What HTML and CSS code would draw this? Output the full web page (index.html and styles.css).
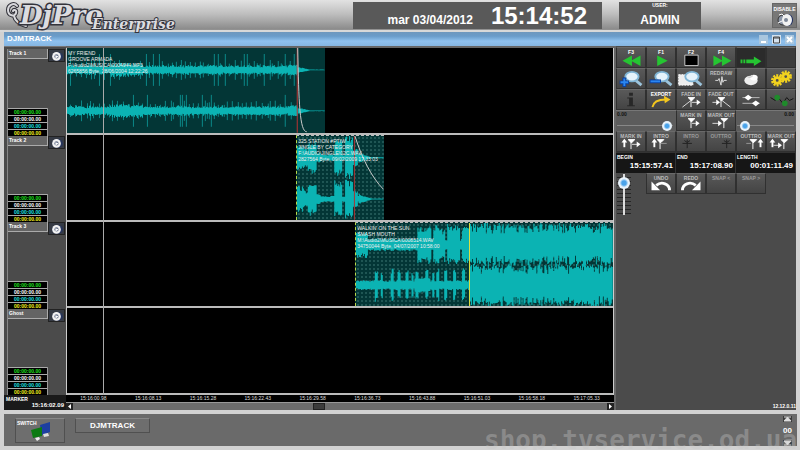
FILE: index.html
```html
<!DOCTYPE html>
<html lang="it">
<head>
  <meta charset="utf-8">
  <title>DjPro Enterprise</title>
  <link rel="stylesheet" href="styles.css">
</head>
<body>
  <header class="topbar">
    <div class="logo">
      <svg class="logo-swirl" viewBox="0 0 22 26">
        <path d="M11 4C8 0 2 3 2 8c0 6 7 7 8 3 1-3-2-4-3-2M8 14c1 5 5 8 12 10" fill="none" stroke="#34343c" stroke-width="4" stroke-linecap="round"/>
        <path d="M11 4C8 0 2 3 2 8c0 6 7 7 8 3 1-3-2-4-3-2M8 14c1 5 5 8 12 10" fill="none" stroke="#d8d8dc" stroke-width="2" stroke-linecap="round"/>
      </svg>
      <span class="logo-name">DjPro</span>
      <span class="logo-edition">Enterprise</span>
    </div>
    <div class="clock">
      <span class="date">mar 03/04/2012</span>
      <span class="time">15:14:52</span>
    </div>
    <div class="user">
      <span class="tiny">USER:</span>
      <span class="user-name">ADMIN</span>
    </div>
    <button class="disable">
      <span class="tiny">DISABLE</span>
      <svg width="18" height="15" viewBox="0 0 18 15">
        <ellipse cx="7" cy="8" rx="5" ry="5" fill="#8d97a8" stroke="#333"/>
        <ellipse cx="12" cy="8" rx="5" ry="6" fill="#1c2c60"/>
        <ellipse cx="11" cy="8" rx="5" ry="6" fill="#f2f2f2"/>
        <circle cx="10" cy="8" r="2" fill="#7d8798"/>
        <path d="M3 3l3-1 2 2M2 11l4-2" stroke="#fff" fill="none"/>
      </svg>
    </button>
  </header>

  <main class="window">
    <div class="titlebar">
      <span>DJMTRACK</span>
      <div class="window-buttons">
        <button aria-label="Minimize"><svg viewBox="0 0 9 9"><path d="M2 6h5v2H2z" fill="#fff"/></svg></button>
        <button aria-label="Maximize"><svg viewBox="0 0 9 9"><path d="M1.500 2h6v6h-6zM1.500 3h6" fill="none" stroke="#444"/></svg></button>
        <button aria-label="Close"><svg viewBox="0 0 9 9"><path d="M2 2l5 5M7 2L2 7" stroke="#fff" stroke-width="2"/></svg></button>
      </div>
    </div>

    <div class="workspace">
      <!-- track heads -->
      <section class="heads">
        <div class="head">
          <div class="head-top"><span class="head-name">Track 1</span><button aria-label="Track 1 audio"><svg viewBox="0 0 12 10"><use href="#speaker"/></svg></button></div>
          <div class="counters"><span class="green">00:00:00.00</span><span>00:00:00.00</span><span class="cyan">00:00:00.00</span><span class="yellow">00:00:00.00</span></div>
        </div>
        <div class="head">
          <div class="head-top"><span class="head-name">Track 2</span><button aria-label="Track 2 audio"><svg viewBox="0 0 12 10"><use href="#speaker"/></svg></button></div>
          <div class="counters"><span class="green">00:00:00.00</span><span>00:00:00.00</span><span class="cyan">00:00:00.00</span><span class="yellow">00:00:00.00</span></div>
        </div>
        <div class="head">
          <div class="head-top"><span class="head-name">Track 3</span><button aria-label="Track 3 audio"><svg viewBox="0 0 12 10"><use href="#speaker"/></svg></button></div>
          <div class="counters"><span class="green">00:00:00.00</span><span>00:00:00.00</span><span class="cyan">00:00:00.00</span><span class="yellow">00:00:00.00</span></div>
        </div>
        <div class="head">
          <div class="head-top"><span class="head-name">Ghost</span><button aria-label="Ghost audio"><svg viewBox="0 0 12 10"><use href="#speaker"/></svg></button></div>
          <div class="counters"><span class="green">00:00:00.00</span><span>00:00:00.00</span><span class="cyan">00:00:00.00</span><span class="yellow">00:00:00.00</span></div>
        </div>
        <div class="marker">
          <span class="tiny">MARKER</span>
          <span class="marker-time">15:16:02.09</span>
        </div>
      </section>

      <!-- timeline -->
      <section class="timeline">
        <div class="lanes">
          <div class="lane">
            <div class="clip clip-first">
              <svg class="wave" id="wave1" viewBox="0 0 258 85" preserveAspectRatio="none"></svg>
              <p>MY FRIEND<br>GROOVE ARMADA<br>F:\Audio2\MUSICA\0004944.MP3<br>6265856 Byte, 28/06/2004 12:22:26</p>
            </div>
          </div>
          <div class="lane">
            <div class="clip clip-second grid-dots">
              <svg class="wave" id="wave2" viewBox="0 0 88 85" preserveAspectRatio="none"></svg>
              <p>325 STATION #PTIW<br>JINGLE BY CATEGORY<br>F:\AUDIO\JINGLE\02C.WAV<br>2827564 Byte, 09/02/2009 17:33:03</p>
            </div>
          </div>
          <div class="lane">
            <div class="clip clip-third grid-dots">
              <svg class="wave" id="wave3" viewBox="0 0 259 85" preserveAspectRatio="none"></svg>
              <p>WALKIN' ON THE SUN<br>SMASH MOUTH<br>M:\Audio2\MUSICA\0008514.WAV<br>34750044 Byte, 04/07/2007 10:58:00</p>
            </div>
          </div>
          <div class="lane"></div>
          <div class="cursor"></div>
        </div>
        <div class="ruler">
          <span>15:16:00.98</span><span>15:16:08.13</span><span>15:16:15.28</span><span>15:16:22.43</span><span>15:16:29.58</span><span>15:16:36.73</span><span>15:16:43.88</span><span>15:16:51.03</span><span>15:16:58.18</span><span>15:17:05.33</span>
        </div>
        <div class="scrollbar">
          <button aria-label="Scroll left"><svg viewBox="0 0 7 7"><path d="M5 1v5L2 3.500z" fill="#fff"/></svg></button>
          <input type="range" min="0" max="100" value="46" aria-label="Scroll timeline">
          <button aria-label="Scroll right"><svg viewBox="0 0 7 7"><path d="M2 1v5l3-2.500z" fill="#fff"/></svg></button>
        </div>
      </section>

      <!-- command panel -->
      <section class="panel">
        <div class="commands">
          <button><span class="lit">F3</span><svg viewBox="0 0 28 20"><path d="M15 8v11L5 13.500zM24 8v11l-10-5.500z" fill="#25c532"/></svg></button>
          <button><span class="lit">F1</span><svg viewBox="0 0 28 20"><path d="M10 8v11l11-5.500z" fill="#25c532"/></svg></button>
          <button><span class="lit">F2</span><svg viewBox="0 0 28 20"><path d="M7.500 7.500h14v11h-14z" fill="#000" stroke="#ccc"/></svg></button>
          <button><span class="lit">F4</span><svg viewBox="0 0 28 20"><path d="M6 8v11l10-5.500zM15 8v11l10-5.500z" fill="#25c532"/></svg></button>
          <button class="dark" aria-label="Go on"><svg viewBox="0 0 28 20"><path d="M3 12h2v4H3zM6 12h2v4H6zM9 12h8V9l8 5-8 5v-3H9z" fill="#25c532"/></svg></button>
          <button class="off" disabled aria-label="Empty"></button>

          <button aria-label="Zoom in"><svg viewBox="0 0 28 20"><use href="#lens"/><path d="M7 9v10M2 14h10" stroke="#0a3f9e" stroke-width="4"/><path d="M7 10v8M3 14h8" stroke="#2b86f0" stroke-width="2"/></svg></button>
          <button aria-label="Zoom out"><svg viewBox="0 0 28 20"><use href="#lens"/><path d="M2 13h12" stroke="#0a3f9e" stroke-width="4"/><path d="M3 13h10" stroke="#2b86f0" stroke-width="2"/></svg></button>
          <button aria-label="Zoom selection"><svg viewBox="0 0 28 20"><path d="M1 6h15v11H1z" fill="#eee" stroke="#fff" stroke-dasharray="2 1"/><use href="#lens"/></svg></button>
          <button><span>REDRAW</span><svg viewBox="0 0 28 20"><path d="M8 12h3l1-2 2 7 1-9 1 6 1-2h3" fill="none" stroke="#ddd"/></svg></button>
          <button aria-label="Mouse"><svg viewBox="0 0 28 20"><ellipse cx="14" cy="12" rx="7" ry="5" fill="#eee"/><ellipse cx="17" cy="9" rx="4" ry="3" fill="#fff"/><path d="M10 8c2 1 4 1 6-1" fill="none" stroke="#bbb"/></svg></button>
          <button aria-label="Settings"><svg viewBox="0 0 28 20"><circle cx="10" cy="12" r="5" fill="none" stroke="#f2d21e" stroke-width="3" stroke-dasharray="2 1.140"/><circle cx="10" cy="12" r="3" fill="none" stroke="#f2d21e" stroke-width="3"/><circle cx="19" cy="8" r="5" fill="none" stroke="#f2d21e" stroke-width="3" stroke-dasharray="2 1.140"/><circle cx="19" cy="8" r="3" fill="none" stroke="#f2d21e" stroke-width="3"/></svg></button>

          <button aria-label="Info"><svg viewBox="0 0 28 20"><path d="M12 3h4v3h-4zM10 8h6v8h2v1h-8v-1h2V9h-2z" fill="#272727"/></svg></button>
          <button><span class="lit">EXPORT</span><svg viewBox="0 0 28 20"><path d="M5 18c1-6 6-8 14-8" fill="none" stroke="#f2c61e" stroke-width="2"/><path d="M17 6l7 4-6 4z" fill="#f2c61e"/></svg></button>
          <button><span>FADE IN</span><svg viewBox="0 0 28 20"><use href="#post"/><path d="M5 18l9-7M15 13h7" stroke="#ddd" fill="none"/><path d="M20 10l4 3-4 3z" fill="#fff"/></svg></button>
          <button><span>FADE OUT</span><svg viewBox="0 0 28 20"><use href="#post"/><path d="M15 11l9 7M5 13h6" stroke="#ddd" fill="none"/><path d="M9 10l4 3-4 3z" fill="#fff"/></svg></button>
          <button aria-label="Levels"><svg viewBox="0 0 28 20"><path d="M5 8h18M5 14h18" stroke="#bbb"/><path d="M11 5l4 3-4 3-4-3zM19 11l4 3-4 3-4-3z" fill="#fff"/></svg></button>
          <button aria-label="Envelope"><svg viewBox="0 0 28 20"><path d="M3 8l5 3 3-3 5 6 4-6 3 3 4-2" fill="none" stroke="#111"/><circle cx="10" cy="8" r="3" fill="#1f8a2b"/><circle cx="18" cy="14" r="3" fill="#1f8a2b"/></svg></button>

          <label class="gain"><span>0.00</span><input type="range" min="0" max="100" value="98"></label>
          <button><span>MARK IN</span><svg viewBox="0 0 28 20"><use href="#post"/><path d="M15 13h6" stroke="#ddd"/><path d="M19 10l4 3-4 3z" fill="#fff"/></svg></button>
          <button><span>MARK OUT</span><svg viewBox="0 0 28 20"><use href="#post" x="3"/><path d="M5 13h7" stroke="#ddd"/><path d="M11 10l4 3-4 3z" fill="#fff"/></svg></button>
          <label class="gain right"><span>0.00</span><input type="range" min="0" max="100" value="6"></label>

          <button><span>MARK IN</span><svg viewBox="0 0 28 20"><use href="#up" x="-9"/><use href="#post"/><path d="M15 13h6" stroke="#ddd"/><path d="M20 10l4 3-4 3z" fill="#fff"/></svg></button>
          <button><span>INTRO</span><svg viewBox="0 0 28 20"><use href="#up" x="-9"/><use href="#post" x="-1"/><path d="M14 12h6" stroke="#999"/></svg></button>
          <button class="faded"><span>INTRO</span><svg viewBox="0 0 28 20"><path d="M5 12h10M10 8v9M7 9l3 2 3-2" fill="none" stroke="#222"/></svg></button>
          <button class="faded"><span>OUTTRO</span><svg viewBox="0 0 28 20"><path d="M15 12h10M20 8v9M17 9l3 2 3-2" fill="none" stroke="#222"/></svg></button>
          <button><span>OUTTRO</span><svg viewBox="0 0 28 20"><path d="M9 12h5" stroke="#999"/><use href="#post" x="2"/><use href="#up" x="8"/></svg></button>
          <button><span>MARK OUT</span><svg viewBox="0 0 28 20"><use href="#up" x="-11"/><path d="M6 14h6" stroke="#ddd"/><path d="M11 11l4 3-4 3z" fill="#fff"/><use href="#post" x="3"/></svg></button>

          <div class="readout"><span class="tiny">BEGIN</span><b>15:15:57.41</b></div>
          <div class="readout"><span class="tiny">END</span><b>15:17:08.90</b></div>
          <div class="readout"><span class="tiny">LENGTH</span><b>00:01:11.49</b></div>

          <div class="volume"><input type="range" min="0" max="100" value="90" aria-label="Volume"></div>
          <button><span>UNDO</span><svg viewBox="0 0 28 20"><path d="M9 12c6-5 14-1 14 5" fill="none" stroke="#fff" stroke-width="3"/><path d="M4 8v9h9z" fill="#fff"/></svg></button>
          <button><span>REDO</span><svg viewBox="0 0 28 20"><path d="M19 12c-6-5-14-1-14 5" fill="none" stroke="#fff" stroke-width="3"/><path d="M24 8v9h-9z" fill="#fff"/></svg></button>
          <button class="faded"><span>SNAP &lt;</span></button>
          <button class="faded"><span>SNAP &gt;</span></button>
        </div>
        <div class="version">12.12.0.11</div>
      </section>
    </div>
  </main>

  <footer class="taskbar">
    <button class="switch">
      <span class="tiny">SWITCH</span>
      <svg width="22" height="20" viewBox="0 0 22 20">
        <path d="M10 4l10-3v10l-8 3z" fill="#1d3fa0"/>
        <path d="M13 13l5-1 1 3-5 1z" fill="#ddd"/>
        <path d="M1 9l11-3v9L3 17z" fill="#0c7a12"/>
        <path d="M5 17l4-1 1 2-3 2z" fill="#eee"/>
      </svg>
    </button>
    <button class="task">DJMTRACK</button>
    <div class="pager">
      <button aria-label="Previous page"><svg viewBox="0 0 9 6"><path d="M1 1h7M4.500 1L1 5h7z" fill="#ddd" stroke="#ddd"/></svg></button>
      <span>00</span>
      <button aria-label="Next page"><svg viewBox="0 0 9 6"><path d="M1 5h7M4.500 5L1 1h7z" fill="#ddd" stroke="#ddd"/></svg></button>
    </div>
  </footer>
  <div class="watermark">shop.tvservice.od.ua</div>

  <!-- shared icon parts -->
  <svg width="0" height="0" class="symbols">
    <defs>
      <g id="speaker"><ellipse cx="7" cy="5" rx="5" ry="4" fill="#26345c"/><ellipse cx="6" cy="5" rx="4" ry="4" fill="#f2f2f2"/><circle cx="6" cy="5" r="2" fill="#68738c"/><path d="M5 4l3 1-3 2z" fill="#fff"/></g>
      <g id="lens"><path d="M19 12l6 5" stroke="#9cc4dc" stroke-width="3"/><ellipse cx="15" cy="8" rx="7" ry="5" fill="#e6f3fb" stroke="#7fb4d4" stroke-width="2"/></g>
      <g id="post"><path d="M14 9v9M11 8h7l-3 3h-1z" fill="#fff" stroke="#fff"/></g>
      <g id="up"><path d="M16 9v7" stroke="#fff" stroke-width="2"/><path d="M13 11l3-4 3 4z" fill="#fff"/></g>
    </defs>
  </svg>

  <script src="script.js"></script>
</body>
</html>
```

FILE: styles.css
```css
* {
  box-sizing: border-box;
}

body {
  margin: 0;
  min-height: 100vh;
  display: flex;
  flex-direction: column;
  overflow: hidden;
  position: relative;
  background-color: #d2d2d2;
  color: #fff;
  font-family: "Liberation Sans", Arial, sans-serif;
}

button {
  display: block;
  margin: 0;
  padding: 0;
  border: none;
  color: #fff;
  font-family: inherit;
}

svg {
  display: block;
}

.symbols {
  position: absolute;
}

.tiny {
  font-size: 5px;
  line-height: 6px;
  font-weight: bold;
}

/* top bar */
.topbar {
  display: flex;
  flex: none;
  height: 32px;
  padding: 2px 3px 2px 6px;
  background: linear-gradient(#e2e2e2, #bdbdbd 45%, #8a8a8a 92%, #d8d8d8 94%);
}

.logo {
  position: relative;
  width: 347px;
}

.logo-swirl {
  width: 22px;
  height: 26px;
}

.logo-name,
.logo-edition {
  position: absolute;
  font-family: "DejaVu Serif", serif;
  font-weight: bold;
  font-style: italic;
  color: #dcdce0;
  -webkit-text-stroke: 3px #34343c;
  paint-order: stroke fill;
}

.logo-name {
  left: 14px;
  top: -2px;
  font-size: 26px;
  line-height: 30px;
}

.logo-edition {
  left: 86px;
  top: 14px;
  font-size: 14px;
  line-height: 16px;
  -webkit-text-stroke-width: 2px;
}

.clock {
  display: flex;
  justify-content: flex-end;
  align-items: baseline;
  width: 249px;
  height: 27px;
  padding-right: 15px;
  gap: 18px;
  background-color: #595959;
  font-weight: bold;
}

.date {
  font-size: 12px;
}

.time {
  font-size: 24px;
  line-height: 27px;
}

.user {
  display: flex;
  flex-direction: column;
  align-items: center;
  width: 82px;
  height: 27px;
  margin-left: 17px;
  background-color: #595959;
}

.user-name {
  font-size: 12px;
  line-height: 24px;
  font-weight: bold;
}

.disable {
  display: flex;
  flex-direction: column;
  align-items: center;
  width: 25px;
  height: 25px;
  margin: 1px 0 0 auto;
  padding-top: 2px;
  background-color: #777;
  border: 1px solid #666;
}

/* main window */
.window {
  flex: 1;
  display: flex;
  flex-direction: column;
  margin: 0 4px;
}

.titlebar {
  display: flex;
  justify-content: space-between;
  align-items: center;
  height: 14px;
  padding: 0 2px 0 3px;
  background: linear-gradient(#6e97bd, #6a9cca 30%, #8fc1ee 65%, #86b6e2);
  font-size: 8px;
  line-height: 14px;
  font-weight: bold;
}

.window-buttons {
  display: flex;
  gap: 4px;
}

.window-buttons button {
  width: 9px;
  height: 9px;
  background-color: #d4e2ee;
}

.window-buttons button:nth-child(1),
.window-buttons button:nth-child(3) {
  background-color: #a9c6de;
}

.workspace {
  flex: 1;
  display: grid;
  grid-template-columns: 62px 1fr 180px;
  background-color: #4b4b4b;
}

/* track heads */
.heads {
  display: flex;
  flex-direction: column;
  padding-top: 2px;
  border-top: 1px solid #777;
}

.head {
  flex: 1;
  display: flex;
  flex-direction: column;
  justify-content: space-between;
  margin-left: 3px;
  border-left: 1px solid #888;
}

.head-top {
  display: flex;
}

.head-name {
  width: 40px;
  height: 10px;
  padding-left: 1px;
  background-color: #646464;
  border: 1px solid #aaa;
  border-width: 0 1px 1px 0;
  font-size: 5px;
  line-height: 8px;
  font-weight: bold;
}

.head-top button {
  width: 17px;
  height: 13px;
  padding: 1px;
  background-color: #353a44;
  border: 1px solid #222;
}

.counters {
  display: grid;
  width: 40px;
  border-right: 1px solid #999;
}

.counters span {
  height: 7px;
  background-color: #000;
  border-top: 1px solid #aaa;
  font-size: 5px;
  line-height: 6px;
  font-weight: bold;
  text-align: center;
}

.counters .green { color: #1fe01f; }
.counters .cyan { color: #1fe0e0; }
.counters .yellow { color: #f0f01f; }

.marker {
  display: flex;
  flex-direction: column;
  height: 15px;
  padding: 1px 2px;
  background-color: #1a1a1a;
}

.marker-time {
  align-self: flex-end;
  font-size: 6px;
  line-height: 7px;
  font-weight: bold;
}

/* timeline */
.timeline {
  display: flex;
  flex-direction: column;
  border-top: 2px solid #666;
  border-right: 2px solid #666;
}

.lanes {
  flex: 1;
  display: flex;
  flex-direction: column;
  position: relative;
  background-color: #000;
  border: 1px solid #ccc;
  border-width: 0 1px;
}

.lane {
  flex: 1;
  position: relative;
  border-bottom: 2px solid #bbb;
}

.clip {
  position: absolute;
  top: 0;
  bottom: 0;
  background-color: #033636;
}

.clip-first { left: 0; width: 47.2%; }
.clip-second { left: 42%; width: 16%; }
.clip-third { left: 52.800%; right: 0; }

.grid-dots {
  background-image: radial-gradient(#1f5654 1px, transparent 1px);
  background-size: 4px 4px;
  border-top: 1px dashed #bbb;
  border-left: 1px dashed #b8d84a;
}

.wave {
  width: 100%;
  height: 100%;
}

.clip p {
  position: absolute;
  top: 2px;
  left: 1px;
  margin: 0;
  white-space: nowrap;
  font-size: 5px;
  line-height: 6px;
  color: #eee;
}

.cursor {
  position: absolute;
  top: 0;
  bottom: 0;
  left: 6.600%;
  width: 1px;
  background-color: #aaa;
}

.ruler {
  display: grid;
  grid-template-columns: repeat(10, 1fr);
  height: 8px;
  background-color: #000;
  border-bottom: 1px solid #999;
  font-size: 5px;
  line-height: 7px;
  text-align: center;
  color: #ddd;
}

.scrollbar {
  display: flex;
  height: 7px;
  background-color: #6c6c6c;
}

.scrollbar button {
  width: 7px;
  background-color: #222;
}

input[type="range"] {
  appearance: none;
  margin: 0;
  background: none;
}

.scrollbar input {
  flex: 1;
  height: 7px;
}

.scrollbar input::-webkit-slider-thumb {
  appearance: none;
  width: 12px;
  height: 7px;
  background-color: #3c3c3c;
  border: 1px solid #222;
}

/* command panel */
.panel {
  display: flex;
  flex-direction: column;
  justify-content: space-between;
  padding-top: 1px;
}

.commands {
  display: grid;
  grid-template-columns: repeat(6, 1fr);
  grid-auto-rows: 21px;
}

.commands button {
  position: relative;
  background: linear-gradient(#595959, #444);
  border: 1px solid #303030;
  border-top-color: #6a6a6a;
}

.commands button.dark {
  background: #2b2b2b;
}

.commands button.off {
  background: #3c3c3c;
}

.commands button svg {
  width: 28px;
  height: 19px;
}

/* caption lies over the icon */
.commands button span {
  position: absolute;
  top: 1px;
  left: 0;
  right: 0;
  font-size: 5px;
  line-height: 6px;
  font-weight: bold;
  white-space: nowrap;
  color: #bbb;
}

.commands button span.lit {
  color: #fff;
}

.commands .faded span {
  color: #999;
}

.gain {
  grid-column: span 2;
  display: flex;
  flex-direction: column;
  justify-content: space-between;
  padding: 0 2px 0 1px;
  background-color: #5c5c5c;
  border-top: 1px solid #777;
  font-size: 5px;
  line-height: 7px;
  font-weight: bold;
  color: #111;
}

.gain.right {
  text-align: right;
}

.gain input {
  width: 100%;
  height: 10px;
  background: linear-gradient(transparent 4px, #888 4px, #888 5px, transparent 5px);
}

.gain:not(.right) input {
  width: 56px;
}

.gain input::-webkit-slider-thumb,
.volume input::-webkit-slider-thumb {
  appearance: none;
  width: 10px;
  height: 10px;
  border-radius: 50%;
  background: radial-gradient(#4aa3ea 25%, #e8f2fa 50%);
}

.readout {
  grid-column: span 2;
  display: flex;
  flex-direction: column;
  padding: 1px 2px 0 1px;
  background-color: #161616;
  border: 1px solid #333;
  border-width: 1px 1px 0 0;
}

.readout b {
  align-self: flex-end;
  font-size: 8px;
  line-height: 12px;
}

.volume {
  height: 42px;
  padding: 1px 0 0 1px;
}

.volume input {
  writing-mode: vertical-lr;
  direction: rtl;
  width: 14px;
  height: 41px;
  background:
    linear-gradient(90deg, transparent 6px, #ddd 6px, #ddd 8px, transparent 8px),
    repeating-linear-gradient(transparent 0, transparent 3px, #262626 3px, #262626 4px);
}

.volume input::-webkit-slider-thumb {
  width: 12px;
  height: 12px;
}

.version {
  font-size: 5px;
  line-height: 7px;
  font-weight: bold;
  text-align: right;
}

/* task bar */
.taskbar {
  flex: none;
  display: flex;
  gap: 10px;
  height: 32px;
  margin: 4px 3px 4px 4px;
  padding: 4px 5px 0 11px;
  background-color: #6a6a6a;
}

.switch,
.task {
  background-color: #6e6e6e;
  border: 1px solid #505050;
  border-top-color: #888;
}

.switch {
  position: relative;
  width: 50px;
  height: 25px;
  padding: 1px 0 0 14px;
}

.switch .tiny {
  position: absolute;
  top: 1px;
  left: 1px;
}

.task {
  width: 75px;
  height: 15px;
  font-size: 8px;
  line-height: 12px;
  font-weight: bold;
}

.pager {
  display: flex;
  flex-direction: column;
  align-items: center;
  justify-content: space-between;
  height: 30px;
  margin: -2px 0 0 auto;
  font-size: 8px;
  line-height: 8px;
  font-weight: bold;
}

.pager button {
  width: 9px;
  height: 6px;
  background-color: #3a3a3a;
}

.watermark {
  position: absolute;
  left: 484px;
  bottom: -5px;
  font-family: "DejaVu Sans Mono", monospace;
  font-size: 26px;
  line-height: 30px;
  font-weight: bold;
  white-space: nowrap;
  color: rgba(200, 200, 200, 0.35);
}
```

FILE: script.js
```js
// Small repeatable random generator, so the waves always look the same
let seed = 7;
function rnd() {
  seed = (seed * 16807) % 2147483647;
  return seed / 2147483647;
}

// Function to build one channel as vertical strokes around a centre line
function channel(width, centre, level) {
  let d = '';
  for (let x = 0; x < width; x++) {
    const a = level(x);
    const up = a * (0.8 + rnd() * 0.3);
    const down = a * (0.8 + rnd() * 0.3);
    d += `M${x + 0.5} ${(centre - up).toFixed(1)}V${(centre + down).toFixed(1)}`;
  }
  return `<path d="${d}" stroke="#0bb3b3" stroke-width="1.05"/>`;
}

function spikes(width, centre, size) {
  let d = '';
  for (let x = 3; x < width; x += 2 + Math.floor(rnd() * 5)) {
    const a = rnd() < 0.2 ? size : size * (0.35 + rnd() * 0.3);
    d += `M${x + 0.5} ${(centre - a).toFixed(1)}V${(centre + a).toFixed(1)}`;
  }
  return `<path d="${d}" stroke="#0b8a8a" stroke-width="1"/>`;
}

// Level of a block list: [start, end, amplitude]
function blocks(list, x, rest) {
  for (const [from, to, amp] of list) {
    if (x >= from && x < to) return amp;
  }
  return rest;
}

function level1(x) {
  if (x > 230) return Math.max(0.4, 3 - (x - 230) / 5);
  if (x > 220) return 5;
  if (x > 42 && x < 76) return 4 + rnd() * 3;
  return 3 + rnd() * 2;
}

function level2(x) {
  if (x > 62) return Math.max(0.5, 5 - (x - 62) / 3);
  return blocks([[0, 7, 13], [7, 11, 9], [11, 20, 16], [20, 24, 5], [38, 46, 19], [49, 57, 21], [57, 62, 9]], x, 3) * (0.75 + rnd() * 0.3);
}

// The full-level part after the cue point
function loud() {
  return rnd() < 0.15 ? 14 : 18 + rnd() * 3;
}

function level3top(x) {
  if (x >= 114) return loud();
  return blocks([[0, 12, 13], [62, 66, 20], [66, 72, 17], [72, 76, 20], [78, 84, 20], [84, 90, 16], [92, 105, 20], [107, 114, 18]], x, 6) * (0.8 + rnd() * 0.25);
}

function level3bottom(x) {
  if (x >= 114) return loud();
  return blocks([[19, 22, 16], [25, 27, 15], [35, 38, 16], [42, 45, 15], [50, 53, 15], [56, 58, 14], [60, 63, 16], [70, 73, 15], [77, 79, 14], [81, 84, 16], [89, 92, 16], [98, 101, 16], [107, 110, 16]], x, x > 58 && x < 75 ? 8 : 5) * (0.8 + rnd() * 0.2);
}

document.getElementById('wave1').innerHTML =
  spikes(228, 22, 16) + spikes(228, 63, 16) +
  channel(258, 22, level1) + channel(258, 63, level1) +
  '<path d="M230.500 0V85" stroke="#b33"/><path d="M231 0C232 55 233 84 240 84" fill="none" stroke="#ccc"/>';

document.getElementById('wave2').innerHTML =
  channel(88, 22, level2) + channel(88, 64, level2) +
  '<path d="M58.500 0V85" stroke="#a33"/><path d="M59 0C66 22 76 42 88 54" fill="none" stroke="#ccc"/>';

document.getElementById('wave3').innerHTML =
  channel(259, 22, level3top) + channel(259, 63, level3bottom) +
  '<path d="M114.500 0V85" stroke="#e0e040"/>';
```
